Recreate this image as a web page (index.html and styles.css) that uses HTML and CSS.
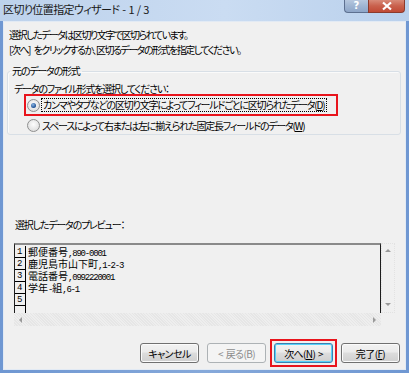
FILE: index.html
```html
<!DOCTYPE html>
<html lang="ja">
<head>
    <meta charset="UTF-8">
    <title>区切り位置指定ウィザード - 1 / 3</title>
    <link rel="stylesheet" href="styles.css">
</head>
<body>
    <div class="window">
        <div class="titlebar">
            <span class="title">区切り位置指定ウィザード - 1 / 3</span>
            <div class="caption-buttons">
                <span class="cap-help">?</span>
                <span class="cap-close">
                    <svg width="12" height="10" viewBox="0 0 12 10"><path d="M2 1.5 L10 8.5 M10 1.5 L2 8.5" stroke="#fff" stroke-width="2.2" fill="none"/></svg>
                </span>
            </div>
        </div>
        <div class="frame">
            <div class="client">
                <p class="intro">選択したデータは区切り文字で区切られています。</p>
                <p class="intro">[次へ] をクリックするか、区切るデータの形式を指定してください。</p>

                <!-- source format -->
                <fieldset class="source">
                    <legend>元のデータの形式</legend>
                    <p class="prompt">データのファイル形式を選択してください：</p>
                    <div class="option marked">
                        <span class="radio checked"></span>
                        <span class="focus">カンマやタブなどの区切り文字によってフィールドごとに区切られたデータ(<u>D</u>)</span>
                    </div>
                    <div class="option plain">
                        <span class="radio"></span>
                        <span class="label">スペースによって右または左に揃えられた固定長フィールドのデータ(<u>W</u>)</span>
                    </div>
                </fieldset>

                <!-- preview -->
                <p class="preview-label">選択したデータのプレビュー：</p>
                <div class="preview">
                    <div class="preview-main">
                        <div class="grid">
                            <div class="row"><span class="num">1</span><span class="cell">郵便番号<span class="an">,890-0001</span></span></div>
                            <div class="row"><span class="num">2</span><span class="cell">鹿児島市山下町<span class="an">,1-2-3</span></span></div>
                            <div class="row"><span class="num">3</span><span class="cell">電話番号<span class="an">,0992220001</span></span></div>
                            <div class="row"><span class="num">4</span><span class="cell">学年<span class="an">-</span>組<span class="an">,6-1</span></span></div>
                            <div class="row"><span class="num">5</span><span class="cell"></span></div>
                            <div class="row tail"><span class="num"></span></div>
                        </div>
                        <div class="vscroll">
                            <span class="arrow up"></span>
                            <span class="arrow down"></span>
                        </div>
                    </div>
                    <div class="hscroll">
                        <span class="arrow left"></span>
                        <span class="arrow right"></span>
                    </div>
                </div>

                <!-- buttons -->
                <div class="buttons">
                    <button class="btn">キャンセル</button>
                    <button class="btn" disabled>&lt; 戻る(B)</button>
                    <span class="mark"><button class="btn default">次へ(<u>N</u>) &gt;</button></span>
                    <button class="btn">完了(<u>F</u>)</button>
                </div>
            </div>
        </div>
    </div>
</body>
</html>
```

FILE: styles.css
```css
* {
    box-sizing: border-box;
}
body {
    margin: 0;
    font-family: "Noto Sans CJK JP", sans-serif;
    font-size: 10px;
    font-feature-settings: "palt";
    letter-spacing: -1.2px;
    word-spacing: 3px;
    color: #000;
    background: #fff;
}
p {
    margin: 0;
}
.window {
    width: 409px;
    height: 373px;
    display: flex;
    flex-direction: column;
    background: #7ba0d4;
}
.titlebar {
    height: 21px;
    display: flex;
    justify-content: space-between;
    align-items: flex-start;
    padding: 0 4px 0 3px;
    background: linear-gradient(to right, #bdd2ec, #cadcf2 55%, #b9d0ec);
}
.title {
    font-size: 11px;
    letter-spacing: -0.6px;
    word-spacing: 1px;
    line-height: 18px;
    color: #1a1a1a;
}
.caption-buttons {
    display: flex;
}
.cap-help,
.cap-close {
    height: 13px;
    border: 1px solid #5d7090;
    border-top: none;
    display: flex;
    align-items: center;
    justify-content: center;
    color: #fff;
    font-family: "DejaVu Sans", sans-serif;
    font-weight: bold;
    font-size: 10px;
    letter-spacing: 0;
    line-height: 12px;
}
.cap-help {
    width: 24px;
    border-right: none;
    border-radius: 0 0 0 4px;
    background: linear-gradient(#b6c7de, #9fb5d2 50%, #8ea6c8);
}
.cap-close {
    width: 37px;
    border-color: #8c3a2c;
    border-radius: 0 0 4px 0;
    background: linear-gradient(#d88a78, #c9604c 50%, #c04a35);
}
.frame {
    flex: 1;
    display: flex;
    padding: 0 3px 3px;
    background: linear-gradient(to right, #6f97d2, #86a9da 50%, #6f97d2);
}
.client {
    flex: 1;
    border: 1px solid #e2eaf4;
    background: #f0f0f0;
    padding: 5px 4px 0 3px;
}
.intro {
    line-height: 15px;
    padding-left: 2px;
    letter-spacing: -1.5px;
}

/* group box */
.source {
    margin: 7px 0 0 0;
    padding: 0 0 0 2px;
    border: 1px solid #d8dfe6;
    border-radius: 3px;
    box-shadow: inset 1px 1px #fafafa;
}
.source legend {
    padding: 0 2px;
    line-height: 14px;
}
.prompt {
    margin: 5px 0 0 4px;
    line-height: 12px;
}
.option {
    display: flex;
    align-items: center;
    white-space: nowrap;
}
.option.marked {
    width: fit-content;
    height: 22px;
    margin: -1px 0 0 14px;
    border: 2px solid #e8141c;
    padding: 0 9px 0 1px;
}
.option.plain {
    height: 18px;
    margin-left: 17px;
}
.radio {
    width: 13px;
    height: 13px;
    flex: none;
    border: 1px solid #8e8f8f;
    border-radius: 50%;
    background: radial-gradient(circle at 50% 40%, #fdfdfd, #d6d6d6);
    display: flex;
    align-items: center;
    justify-content: center;
}
.radio.checked::after {
    content: "";
    width: 5px;
    height: 5px;
    border-radius: 50%;
    background: radial-gradient(circle at 40% 35%, #8cb6e4, #1c4f93 70%);
}
.focus {
    margin-left: 1px;
    padding: 0 2px 0 1px;
    border: 1px dotted #000;
    line-height: 12px;
}
.label {
    margin-left: 2px;
}

/* preview */
.preview-label {
    margin: 83px 0 0 8px;
    line-height: 14px;
}
.preview {
    width: 381px;
    margin: 11px 0 0 7px;
}
.preview-main {
    display: flex;
    height: 70px;
}
.grid {
    flex: 1;
    border-top: 2px solid #8a8a8a;
    border-left: 1px solid #1e1e1e;
    border-right: 1px solid #1e1e1e;
    padding-top: 1px;
    font-size: 10px;
    letter-spacing: 0;
    font-feature-settings: normal;
}
.row {
    display: flex;
    height: 12px;
    line-height: 12px;
}
.row.tail {
    height: 7px;
}
.num {
    width: 11px;
    border-right: 1px solid #000;
    border-bottom: 1px solid #000;
    padding-left: 2px;
    font-family: "Liberation Mono", monospace;
    font-size: 9px;
}
.row.tail .num {
    border-bottom: none;
}
.cell {
    padding-left: 2px;
}
.an {
    font-family: "Liberation Mono", monospace;
    font-size: 9px;
    letter-spacing: -1.2px;
}
.vscroll {
    width: 14px;
    display: flex;
    flex-direction: column;
    justify-content: space-between;
    align-items: center;
    padding: 5px 0 6px;
    border: 1px dotted #e2e2e2;
}
.hscroll {
    width: 367px;
    height: 13px;
    display: flex;
    justify-content: space-between;
    align-items: center;
    padding: 0 5px;
    background: repeating-linear-gradient(45deg, #e6e6e6 0 1px, #eeeeee 1px 2px);
}
.arrow {
    width: 0;
    height: 0;
    border: 3px solid transparent;
}
.arrow.up {
    border-bottom-color: #9a9a9a;
    border-top: none;
}
.arrow.down {
    border-top-color: #9a9a9a;
    border-bottom: none;
}
.arrow.left {
    border-right-color: #9a9a9a;
    border-left: none;
}
.arrow.right {
    border-left-color: #9a9a9a;
    border-right: none;
}

/* buttons */
.buttons {
    display: flex;
    justify-content: flex-end;
    align-items: center;
    gap: 8px;
    margin-top: 17px;
    padding-right: 1px;
}
.btn {
    width: 59px;
    height: 20px;
    padding: 0;
    font: inherit;
    letter-spacing: -0.6px;
    word-spacing: 1px;
    color: #000;
    border: 1px solid #707070;
    border-radius: 3px;
    background: linear-gradient(#f2f2f2, #ebebeb 45%, #dddddd 50%, #cfcfcf);
    box-shadow: inset 0 0 0 1px #fbfbfb;
}
.btn:disabled {
    color: #8c8c8c;
    border-color: #adb2b5;
    background: #f4f4f4;
    box-shadow: none;
}
.mark {
    display: flex;
    margin: -4px;
    padding: 2px;
    border: 2px solid #e8141c;
}
.btn.default {
    border-color: #3c7fb1;
    box-shadow: inset 0 0 0 1px #56d1f8;
}
```
